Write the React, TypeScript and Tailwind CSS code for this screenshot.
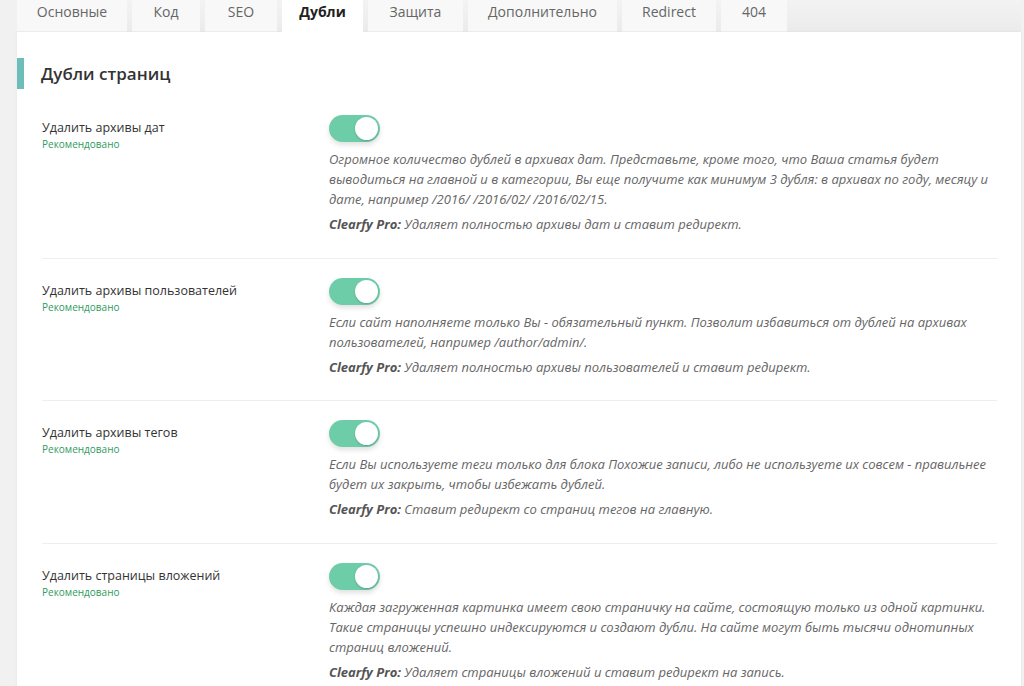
import React, { useState } from "react";

const tabs = [
  { name: "Основные", w: "w-[110px]" },
  { name: "Код", w: "w-[68px]" },
  { name: "SEO", w: "w-[72px]" },
  { name: "Дубли", w: "w-[81px]" },
  { name: "Защита", w: "w-[95px]" },
  { name: "Дополнительно", w: "w-[149px]" },
  { name: "Redirect", w: "w-[94px]" },
  { name: "404", w: "w-[66px]" },
];

interface Option {
  id: string;
  label: string;
  text: string;
  pro: string;
}

const options: Option[] = [
  {
    id: "date",
    label: "Удалить архивы дат",
    text: "Огромное количество дублей в архивах дат. Представьте, кроме того, что Ваша статья будет выводиться на главной и в категории, Вы еще получите как минимум 3 дубля: в архивах по году, месяцу и дате, например /2016/ /2016/02/ /2016/02/15.",
    pro: "Удаляет полностью архивы дат и ставит редирект.",
  },
  {
    id: "users",
    label: "Удалить архивы пользователей",
    text: "Если сайт наполняете только Вы - обязательный пункт. Позволит избавиться от дублей на архивах пользователей, например /author/admin/.",
    pro: "Удаляет полностью архивы пользователей и ставит редирект.",
  },
  {
    id: "tags",
    label: "Удалить архивы тегов",
    text: "Если Вы используете теги только для блока Похожие записи, либо не используете их совсем - правильнее будет их закрыть, чтобы избежать дублей.",
    pro: "Ставит редирект со страниц тегов на главную.",
  },
  {
    id: "attach",
    label: "Удалить страницы вложений",
    text: "Каждая загруженная картинка имеет свою страничку на сайте, состоящую только из одной картинки. Такие страницы успешно индексируются и создают дубли. На сайте могут быть тысячи однотипных страниц вложений.",
    pro: "Удаляет страницы вложений и ставит редирект на запись.",
  },
];

function Toggle({ on, onChange }: { on: boolean; onChange: () => void }) {
  return (
    <button
      type="button"
      onClick={onChange}
      className={`relative flex h-[27px] w-[51px] items-center rounded-full px-[2px] shadow-[0_3px_5px_rgba(0,0,0,0.12)] ${
        on ? "justify-end bg-[#6ecda9]" : "justify-start bg-[#d5d5d5]"
      }`}
    >
      <span className="h-[23px] w-[23px] rounded-full bg-white shadow-[0_1px_2px_rgba(0,0,0,0.2)]" />
    </button>
  );
}

export default function App() {
  const [active, setActive] = useState("Дубли");
  const [state, setState] = useState<Record<string, boolean>>({ date: true, users: true, tags: true, attach: true });

  return (
    <div
      className="min-h-[686px] bg-[#f1f1f1] pl-[17px] pr-[3px] text-[#444]"
      style={{ fontFamily: '"Open Sans", "Liberation Sans", sans-serif' }}
    >
      <div className="flex h-[32px] gap-[5px] bg-gradient-to-b from-[#f3f3f3] to-[#ebebeb]">
        {tabs.map((t) => (
          <button
            key={t.name}
            onClick={() => setActive(t.name)}
            className={`flex h-full ${t.w} items-start justify-center pt-[2px] text-[14px] leading-[20px] ${
              active === t.name
                ? "bg-white font-bold text-[#222]"
                : "bg-[#f8f8f8] text-[#666] shadow-[inset_0_-1px_0_#ececec]"
            }`}
          >
            {t.name}
          </button>
        ))}
      </div>

      <div className="bg-white pb-10 shadow-[0_0_3px_rgba(0,0,0,0.06)]">
        <div className="flex items-center pt-[26px]">
          <span className="h-[31px] w-[7px] bg-[#6dbdba]" />
          <h2 className="pl-[17px] text-[17px] font-semibold text-[#333]">Дубли страниц</h2>
        </div>

        <div className="pl-[25px] pr-[24px] pt-[7px]">
          {options.map((o) => (
            <div key={o.id} className="flex border-b border-[#eeeeee] pb-[23.5px] pt-[19px]">
              <div className="w-[287px] shrink-0 pt-[4px]">
                <div className="text-[12.5px] leading-[18px] text-[#333]">{o.label}</div>
                <div className="text-[10px] leading-[14px] text-[#2f9a5f]">Рекомендовано</div>
              </div>
              <div className="flex-1">
                <Toggle on={state[o.id]} onChange={() => setState({ ...state, [o.id]: !state[o.id] })} />
                <p className="mt-[7px] text-[13px] italic leading-[20px] text-[#666]">{o.text}</p>
                <p className="mt-[5px] text-[13px] italic leading-[20px] text-[#666]">
                  <b className="text-[#555]">Clearfy Pro:</b> {o.pro}
                </p>
              </div>
            </div>
          ))}
        </div>
      </div>
    </div>
  );
}
